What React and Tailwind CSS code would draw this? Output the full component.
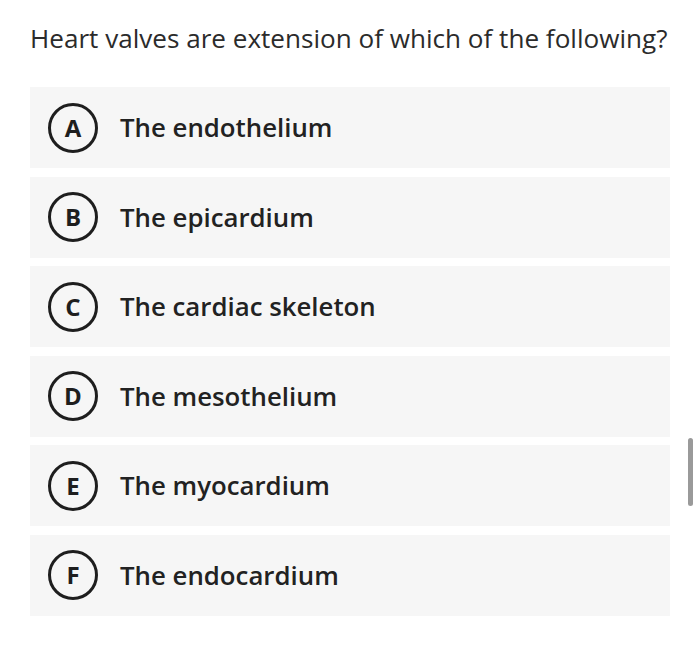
export default function App() {
  const options = [
    ["A", "The endothelium"],
    ["B", "The epicardium"],
    ["C", "The cardiac skeleton"],
    ["D", "The mesothelium"],
    ["E", "The myocardium"],
    ["F", "The endocardium"],
  ];
  return (
    <div className="relative w-[700px] h-[654px] bg-white overflow-hidden" style={{ fontFamily: '"Open Sans", sans-serif' }}>
      <div className="pl-[30px] pt-[19px] text-[26.1px] leading-[38px] text-[#2b2b2b] font-normal">
        Heart valves are extension of which of the following?
      </div>
      <div className="mt-[30px] mx-[30px] flex flex-col gap-[8.5px]">
        {options.map(([l, t]) => (
          <div key={l} className="h-[81px] bg-[#f6f6f6] flex items-center">
            <div className="ml-[18px] w-[50px] h-[50px] rounded-full border-[3px] border-[#1e1e1e] flex items-center justify-center text-[24px] font-bold text-[#1e1e1e] leading-none">
              {l}
            </div>
            <div className="ml-[22px] text-[25.8px] font-semibold text-[#222]">{t}</div>
          </div>
        ))}
      </div>
      <div className="absolute left-[688px] top-[438px] w-[5px] h-[68px] rounded-full bg-[#9a9a9a]" />
    </div>
  );
}
